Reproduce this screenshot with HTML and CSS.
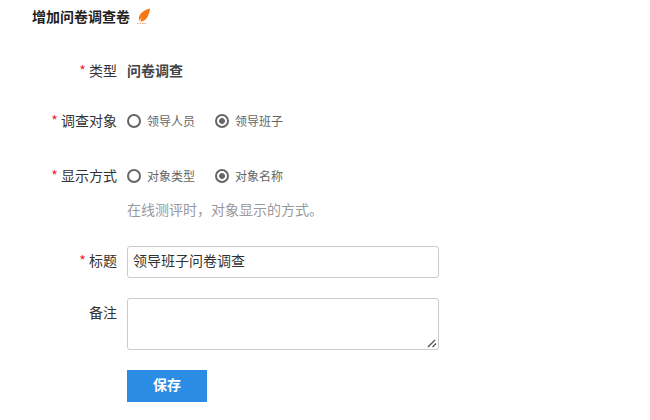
FILE: index.html
```html
<!DOCTYPE html>
<html lang="zh-CN">
<head>
    <meta charset="UTF-8">
    <title>增加问卷调查卷</title>
    <link rel="stylesheet" href="styles.css">
</head>
<body>

    <h1 class="page-title">增加问卷调查卷
        <svg class="title-icon" width="14" height="17" viewBox="0 0 14 17">
            <path d="M13 0.5C8.4 1.5 4 4 2.4 8C1.7 9.8 1.7 11.5 2.2 12.8L4.8 9L3.1 13.5C6.2 13.9 9.3 11.8 10.8 8.6C12 6 12.8 3 13 0.5Z" fill="#f47a17"/>
            <path d="M0 15.5H10" stroke="#f9a45c" stroke-width="1" stroke-dasharray="1.5 1"/>
        </svg>
    </h1>

    <form class="form">
        <div class="row row-type">
            <label class="label"><span class="req">*</span> 类型</label>
            <div class="value">问卷调查</div>
        </div>

        <div class="row row-target">
            <label class="label"><span class="req">*</span> 调查对象</label>
            <div class="radios">
                <span class="radio"><i class="dot"></i><span class="radio-text">领导人员</span></span>
                <span class="radio"><i class="dot checked"></i><span class="radio-text">领导班子</span></span>
            </div>
        </div>

        <div class="row row-display">
            <label class="label"><span class="req">*</span> 显示方式</label>
            <div class="radios">
                <span class="radio"><i class="dot"></i><span class="radio-text">对象类型</span></span>
                <span class="radio"><i class="dot checked"></i><span class="radio-text">对象名称</span></span>
            </div>
        </div>

        <div class="row row-hint">
            <div class="hint">在线测评时，对象显示的方式。</div>
        </div>

        <div class="row row-title">
            <label class="label"><span class="req">*</span> 标题</label>
            <input type="text" class="input" value="领导班子问卷调查">
        </div>

        <div class="row row-note">
            <label class="label">备注</label>
            <div class="textarea-wrap">
                <textarea class="textarea"></textarea>
                <svg class="grip" width="15" height="15" viewBox="0 0 15 15">
                    <path d="M5 13L12 6M9.5 13L13 9.5" stroke="#555" stroke-width="1.4" fill="none"/>
                </svg>
            </div>
        </div>

        <div class="row row-save">
            <button type="button" class="save">保存</button>
        </div>
    </form>

</body>
</html>
```
FILE: styles.css
```css
body {
    margin: 0;
    background-color: #fff;
    color: #333;
    font-family: "Noto Sans CJK SC", "Noto Sans", sans-serif;
    font-size: 14px;
}

.page-title {
    display: flex;
    align-items: center;
    gap: 7px;
    height: 32px;
    margin: 0;
    padding-left: 32px;
    color: #222;
    font-size: 14px;
    font-weight: 700;
}

.title-icon {
    flex: none;
}

.form {
    padding-top: 24px;
}

.row {
    display: flex;
    align-items: center;
    padding-left: 127px;
}

.label {
    width: 117px;
    margin-left: -127px;
    margin-right: 10px;
    padding-bottom: 2px;
    text-align: right;
    flex: none;
}

.req {
    color: #f5222d;
}

.value {
    padding-bottom: 2px;
    font-weight: 700;
    color: #444;
}

.row-type {
    height: 30px;
}

.row-target {
    height: 30px;
    margin-top: 20px;
}

.row-display {
    height: 30px;
    margin-top: 25px;
}

.row-hint {
    height: 20px;
    margin-top: 10px;
}

.row-title {
    margin-top: 25px;
}

.row-title .label {
    padding-bottom: 4px;
}

.row-note {
    align-items: flex-start;
    margin-top: 20px;
}

.row-note .label {
    padding-top: 4px;
}

.row-save {
    margin-top: 20px;
}

.radios {
    display: flex;
    gap: 20px;
}

.radio {
    display: flex;
    align-items: center;
    gap: 6px;
    color: #666;
    font-size: 12px;
}

.radio-text {
    padding-bottom: 2px;
}

.dot {
    box-sizing: border-box;
    width: 14px;
    height: 14px;
    border: 2px solid #666;
    border-radius: 50%;
    background-color: #fff;
}

.dot.checked {
    background: radial-gradient(circle, #666 0, #666 2.6px, #fff 3.2px);
}

.hint {
    padding-bottom: 4px;
    color: #999;
    font-size: 14px;
}

.input,
.textarea {
    box-sizing: border-box;
    width: 312px;
    margin: 0;
    border: 1px solid #ccc;
    border-radius: 3px;
    color: #333;
    font-family: inherit;
    font-size: 14px;
    outline: none;
}

.input {
    height: 32px;
    padding: 0 5px 4px;
}

.textarea-wrap {
    position: relative;
}

.textarea {
    display: block;
    height: 52px;
    padding: 6px;
    resize: none;
}

.grip {
    position: absolute;
    right: 1px;
    bottom: 1px;
}

.save {
    width: 80px;
    height: 32px;
    padding: 0 0 4px;
    border: none;
    background-color: #2b8ce4;
    color: #fff;
    font-family: inherit;
    font-size: 14px;
    font-weight: 700;
    cursor: pointer;
}
```
